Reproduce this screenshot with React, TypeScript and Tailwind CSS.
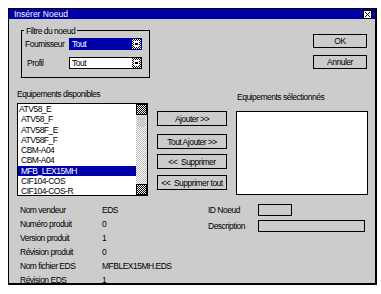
const items = [
  "ATV58_E",
  "ATV58_F",
  "ATV58F_E",
  "ATV58F_F",
  "CBM-A04",
  "CBM-A04",
  "MFB_LEX15MH",
  "CIF104-COS",
  "CIF104-COS-R",
]

const infos = [
  ["Nom vendeur", "EDS"],
  ["Numéro produit", "0"],
  ["Version produit", "1"],
  ["Révision produit", "0"],
  ["Nom fichier EDS", "MFBLEX15MH.EDS"],
  ["Révision EDS", "1"],
]

function ComboArrow({ id }: { id: string }) {
  return (
    <svg width="9" height="10" viewBox="0 0 9 10" shapeRendering="crispEdges" className="shrink-0">
      <defs>
        <pattern id={id} width="2" height="2" patternUnits="userSpaceOnUse">
          <rect width="1" height="1" fill="#000" />
          <rect x="1" y="1" width="1" height="1" fill="#000" />
        </pattern>
      </defs>
      <rect width="9" height="10" fill="#fff" />
      <rect width="9" height="10" fill={`url(#${id})`} />
      <rect x="2" y="2" width="5" height="6" fill="#fff" />
      <rect x="3" y="4" width="3" height="2" fill="#000" />
    </svg>
  )
}

function Combo({ selected, id }: { selected?: boolean; id: string }) {
  return (
    <div
      className={
        selected
          ? "flex items-center w-[73px] h-[12px] border border-[#0000a8] bg-[#0000a8] text-white"
          : "flex items-center w-[73px] h-[12px] border border-black bg-white text-black"
      }
    >
      <span className="flex-1 pl-[2px] leading-[10px]">Tout</span>
      <ComboArrow id={id} />
    </div>
  )
}

function Btn({ label, className }: { label: string; className: string }) {
  return (
    <div className={"flex items-center justify-center border border-black leading-[10px] " + className}>
      {label}
    </div>
  )
}

function ScrollArrow() {
  return (
    <div className="h-[11px] border border-black bg-[repeating-conic-gradient(#000_0_25%,#fff_0_50%)] bg-[length:2px_2px]" />
  )
}

export default function App() {
  return (
    <div className="w-[381px] h-[294px] bg-white pl-[8px] pt-[8px] font-['Liberation_Sans',Arial,sans-serif] text-[8.5px] tracking-[-0.5px] text-black">
      <div className="w-[369px] h-[277px] border-l border-t border-r-2 border-b-2 border-black bg-[#cccccc] flex flex-col overflow-hidden">
        {/* barre de titre */}
        <div className="h-[13px] bg-[#0000a8] flex items-center justify-between pl-[5px] pr-[3px] text-white tracking-normal">
          <span className="leading-[10px]">Insérer Noeud</span>
          <svg width="9" height="9" viewBox="0 0 9 9" shapeRendering="crispEdges">
            <rect x="0.5" y="0.5" width="8" height="8" fill="#fff" stroke="#000" />
            <path d="M2 2L7 7M7 2L2 7" stroke="#000" strokeWidth="1.2" />
          </svg>
        </div>

        {/* filtre + boutons OK / Annuler */}
        <div className="flex justify-between">
          <div className="relative ml-[12px] mt-[11px] w-[129px] h-[48px] border border-black">
            <span className="absolute -top-[5px] left-[2px] px-[2px] bg-[#cccccc] leading-[10px]">
              Filtre du noeud
            </span>
            <div className="flex items-center mt-[7px] ml-[3px]">
              <span className="w-[44px] leading-[10px]">Fournisseur</span>
              <Combo selected id="ck1" />
            </div>
            <div className="flex items-center mt-[7px] ml-[5px]">
              <span className="w-[42px] leading-[10px]">Profil</span>
              <Combo id="ck2" />
            </div>
          </div>
          <div className="flex flex-col gap-[7px] mt-[15px] mr-[8px] w-[54px]">
            <Btn label="OK" className="h-[14px]" />
            <Btn label="Annuler" className="h-[14px]" />
          </div>
        </div>

        {/* listes */}
        <div className="flex mt-[11px]">
          <div className="flex flex-col ml-[8px]">
            <span className="h-[10px] leading-[10px]">Equipements disponibles</span>
            <div className="flex mt-[4px] w-[131px] h-[93px] border border-black bg-white">
              <div className="flex-1 flex flex-col">
                {items.map((it, i) => (
                  <div
                    key={i}
                    className={
                      it === "MFB_LEX15MH"
                        ? "h-[10.25px] leading-[10.25px] pl-[3px] bg-[#0000a8] text-white"
                        : i === 0
                        ? "h-[10.25px] leading-[10.25px] pl-[1px]"
                        : "h-[10.25px] leading-[10.25px] pl-[3px]"
                    }
                  >
                    {it}
                  </div>
                ))}
              </div>
              <div className="w-[11px] flex flex-col">
                <ScrollArrow />
                <div className="flex-1 bg-[repeating-conic-gradient(#b8b8b8_0_25%,#fff_0_50%)] bg-[length:2px_2px]">
                  <div className="mt-[2px] mx-[2px] h-[10px] bg-[#cccccc]" />
                </div>
                <ScrollArrow />
              </div>
            </div>
          </div>

          <div className="flex flex-col ml-[9px] mt-[22px] w-[70px]">
            <Btn label="Ajouter >>" className="h-[15px]" />
            <Btn label="Tout Ajouter >>" className="h-[15px] mt-[8px]" />
            <Btn label="<<  Supprimer" className="h-[15px] mt-[5px] whitespace-pre" />
            <Btn label="<<  Supprimer tout" className="h-[15px] mt-[6px] whitespace-pre" />
          </div>

          <div className="flex flex-col ml-[9px]">
            <span className="mt-[3px] pl-[1px] h-[10px] leading-[10px]">Equipements sélectionnés</span>
            <div className="mt-[9px] w-[132px] h-[84px] border border-black bg-white" />
          </div>
        </div>

        {/* informations */}
        <div className="flex mt-[7px]">
          <div className="ml-[11px] w-[182px] grid grid-cols-[82px_1fr]">
            {infos.map(([k, v]) => (
              <div key={k} className="contents">
                <span className="h-[14px] flex items-center">{k}</span>
                <span className="h-[14px] flex items-center">{v}</span>
              </div>
            ))}
          </div>
          <div className="ml-[6px] mt-[1px] flex flex-col gap-[4px]">
            <div className="flex items-center h-[12px]">
              <span className="w-[50px]">ID Noeud</span>
              <div className="w-[34px] h-[12px] border border-black" />
            </div>
            <div className="flex items-center h-[12px]">
              <span className="w-[50px]">Description</span>
              <div className="w-[107px] h-[12px] border border-black" />
            </div>
          </div>
        </div>
      </div>
    </div>
  )
}
